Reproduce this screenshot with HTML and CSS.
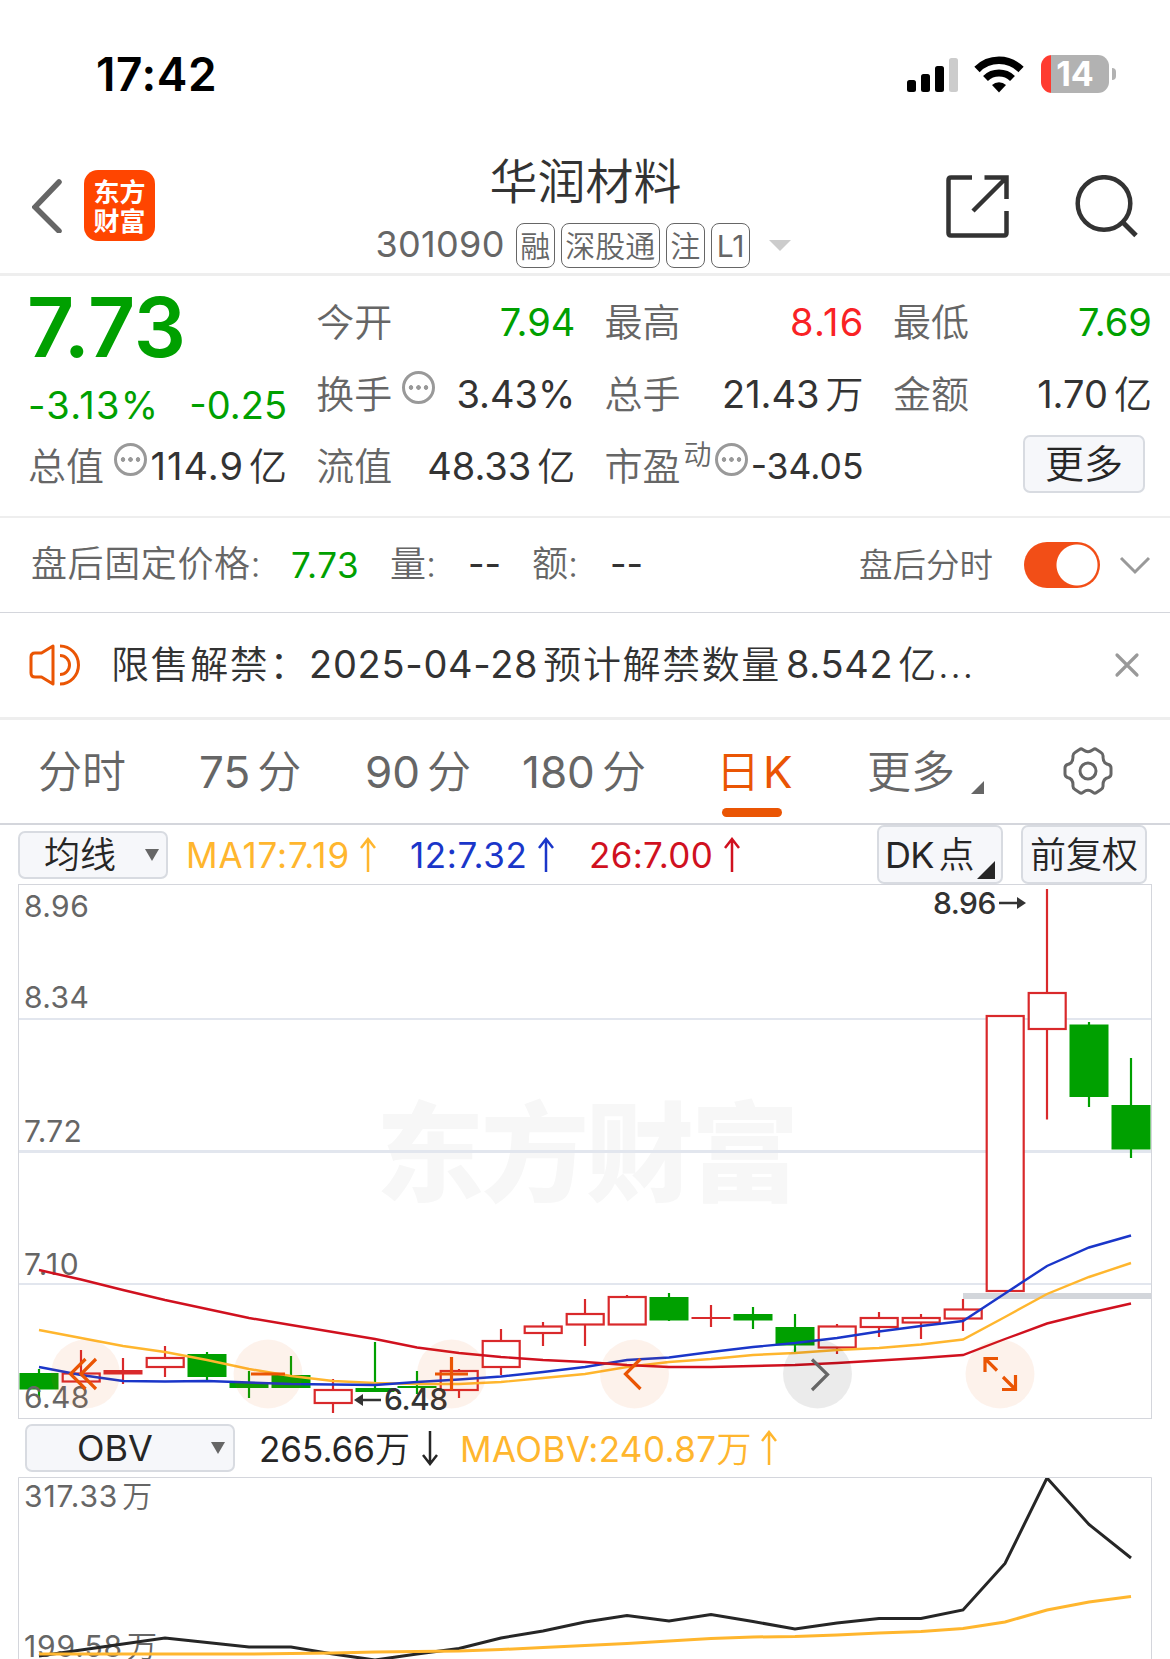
FILE: index.html
```html
<!DOCTYPE html>
<html lang="zh-CN">
<head>
    <meta charset="UTF-8">
    <meta name="viewport" content="width=device-width, initial-scale=1.0">
    <title>华润材料 301090</title>
    <link rel="stylesheet" href="styles.css">
</head>
<body>
    <div class="status-bar">
        <span class="time">17:42</span>
        <div class="status-icons">
            <svg class="signal" width="51" height="35" viewBox="0 0 51 35">
                <rect x="0" y="23" width="9" height="12" rx="2.5"/>
                <rect x="14" y="17" width="9" height="18" rx="2.5"/>
                <rect x="28" y="9" width="9" height="26" rx="2.5"/>
                <rect x="42" y="1" width="9" height="34" rx="2.5" fill="#ccc"/>
            </svg>
            <svg class="wifi" width="50" height="37" viewBox="0 0 50 37">
                <path d="M3 13.5 A31 31 0 0 1 47 13.5" fill="none" stroke="#000" stroke-width="7.5"/>
                <path d="M11.5 22.5 A19.5 19.5 0 0 1 38.5 22.5" fill="none" stroke="#000" stroke-width="7"/>
                <path d="M25 36.5 L18 29 A10 10 0 0 1 32 29 Z"/>
            </svg>
            <div class="battery"><span>14</span></div>
        </div>
    </div>

    <header class="header">
        <div class="header-left">
            <svg width="31" height="54" viewBox="0 0 31 54"><path d="M27 3 L3 28 L27 52" fill="none" stroke="#666" stroke-width="5.5" stroke-linecap="round"/></svg>
            <div class="logo"><span>东方</span><span>财富</span></div>
        </div>
        <div class="header-title">
            <h1>华润材料</h1>
            <div class="sub">
                <span class="code">301090</span>
                <span class="tag">融</span>
                <span class="tag">深股通</span>
                <span class="tag">注</span>
                <span class="tag tag-l1">L1</span>
                <i class="sub-arrow"></i>
            </div>
        </div>
        <div class="header-right">
            <svg width="64" height="64" viewBox="0 0 64 64" fill="none" stroke="#333" stroke-width="4.5">
                <path d="M26 2.5 H5 Q2.5 2.5 2.5 5 V58 Q2.5 60.5 5 60.5 H58 Q60.5 60.5 60.5 58 V36"/>
                <path d="M38.5 2.5 H60.5 V24 M60 3 L27 36"/>
            </svg>
            <svg width="64" height="64" viewBox="0 0 64 64" fill="none" stroke="#333" stroke-width="4.5">
                <circle cx="29" cy="28.5" r="26.3"/>
                <path d="M47.5 47 L61 60.5" stroke-width="5"/>
            </svg>
        </div>
    </header>

    <section class="quote">
        <div class="price-box">
            <div class="price">7.73</div>
            <div class="change"><span class="wide">-3.13%</span><span>-0.25</span></div>
        </div>
        <div class="cell"><label>今开</label><b class="green">7.94</b></div>
        <div class="cell"><label>最高</label><b class="red wide">8.16</b></div>
        <div class="cell"><label>最低</label><b class="green">7.69</b></div>
        <div class="cell"><label>换手</label><i class="info"></i><b>3.43%</b></div>
        <div class="cell"><label>总手</label><b>21.43<em>万</em></b></div>
        <div class="cell"><label>金额</label><b>1.70<em>亿</em></b></div>
        <div class="cell"><label>总值</label><i class="info"></i><b class="cap">114.9<em>亿</em></b></div>
        <div class="cell"><label>流值</label><b>48.33<em>亿</em></b></div>
        <div class="cell"><label>市盈</label><sup>动</sup><i class="info info-pe"></i><b class="small">-34.05</b></div>
        <div class="cell"><button class="btn more-btn">更多</button></div>
    </section>

    <section class="after-hours">
        <span class="ah-label">盘后固定价格:</span>
        <span class="ah-price">7.73</span>
        <span class="ah-item">量:</span>
        <span class="dash">--</span>
        <span class="ah-item">额:</span>
        <span class="dash">--</span>
        <span class="ah-switch-label">盘后分时</span>
        <span class="switch"></span>
        <svg width="32" height="20" viewBox="0 0 32 20"><path d="M2 3 L16 17 L30 3" fill="none" stroke="#999" stroke-width="3"/></svg>
    </section>

    <section class="notice">
        <svg width="52" height="44" viewBox="0 0 52 44" fill="none" stroke="#ea5504" stroke-width="3">
            <path d="M24 3 V41 L12.5 34 H6 Q2 34 2 30 V14 Q2 10 6 10 H12.5 Z" stroke-linejoin="round"/>
            <path d="M31 12.5 A9.5 9.5 0 0 1 31 31.5"/>
            <path d="M31 3 A18.5 19 0 0 1 31 41"/>
        </svg>
        <p>限售解禁：<span class="date">2025-04-28</span>预计解禁数量<span class="amount">8.542</span>亿<span class="dots">...</span></p>
        <svg class="close" width="26" height="26" viewBox="0 0 26 26"><path d="M3 3 L23 23 M23 3 L3 23" stroke="#999" stroke-width="3.2" stroke-linecap="round"/></svg>
    </section>

    <nav class="tabs">
        <a class="tab t1">分时</a>
        <a class="tab t2">75<em>分</em></a>
        <a class="tab t3">90<em>分</em></a>
        <a class="tab t4">180<em>分</em></a>
        <a class="tab t5 active">日<em>K</em></a>
        <a class="tab t6">更多</a>
        <i class="corner"></i>
        <svg class="gear" width="50" height="50" viewBox="0 0 50 50" fill="none" stroke="#666" stroke-width="3">
            <path d="M16.5 3.5 Q18.5 2 20.5 4 Q25 7.5 29.5 4 Q31.5 2 33.5 3.5 L38 6.5 Q40.5 8 40 11 Q40 17.5 45.5 18.5 Q48 19.5 48 22 V28 Q48 30.5 45.5 31.5 Q40 32.5 40 39 Q40.5 42 38 43.5 L33.5 46.5 Q31.5 48 29.5 46 Q25 42.5 20.5 46 Q18.5 48 16.5 46.5 L12 43.5 Q9.5 42 10 39 Q10 32.5 4.5 31.5 Q2 30.5 2 28 V22 Q2 19.5 4.5 18.5 Q10 17.5 10 11 Q9.5 8 12 6.5 Z"/>
            <circle cx="25" cy="25" r="8"/>
        </svg>
    </nav>

    <div class="toolbar">
        <button class="btn select ma-select">均线<i class="caret"></i></button>
        <span class="ind ma17">MA17:7.19</span>
        <svg class="arrow yellow" width="16" height="36" viewBox="0 0 16 36"><path d="M8 35 V2 M1 11 L8 2 L15 11"/></svg>
        <span class="ind ma12">12:7.32</span>
        <svg class="arrow blue" width="16" height="36" viewBox="0 0 16 36"><path d="M8 35 V2 M1 11 L8 2 L15 11"/></svg>
        <span class="ind ma26">26:7.00</span>
        <svg class="arrow crimson" width="16" height="36" viewBox="0 0 16 36"><path d="M8 35 V2 M1 11 L8 2 L15 11"/></svg>
        <button class="btn dk-btn">DK<em>点</em>
            <svg class="dk-corner" width="18" height="18" viewBox="0 0 18 18"><path d="M18 0 V18 H0 Z"/></svg>
        </button>
        <button class="btn fq-btn">前复权</button>
    </div>

    <svg class="chart" width="1134" height="535" viewBox="18 884 1134 535">
        <text class="watermark" x="376" y="1193" textLength="423">东方财富</text>
        <g class="grid">
            <path d="M18 1019 H1152" stroke-width="2"/>
            <path d="M18 1151.5 H1152" stroke-width="3"/>
            <path d="M18 1284 H1152" stroke-width="2"/>
        </g>
        <path d="M963 1296 H1152" stroke="#d3d6db" stroke-width="6"/>
        <g id="candles"></g>
        <g class="axis">
            <text x="24" y="917">8.96</text>
            <text x="24" y="1008">8.34</text>
            <text x="24" y="1142">7.72</text>
            <text x="24" y="1274.5" class="loose">7.10</text>
            <text x="24" y="1407.5">6.48</text>
        </g>
        <g id="maLines"></g>
        <g class="mark">
            <text x="933" y="914">8.96</text>
            <path d="M999 903 H1018" stroke="#333" stroke-width="2.5"/>
            <path d="M1017 897 L1026 903 L1017 909 Z"/>
            <text x="384" y="1410">6.48</text>
            <path d="M381 1400 H362" stroke="#333" stroke-width="2.5"/>
            <path d="M363 1394 L354 1400 L363 1406 Z"/>
        </g>
        <g class="controls">
            <circle cx="85.5" cy="1374" r="34.5"/>
            <circle cx="268" cy="1374" r="34.5"/>
            <circle cx="451.5" cy="1374" r="34.5"/>
            <circle cx="634.5" cy="1374" r="34.5"/>
            <circle class="disabled" cx="817.5" cy="1374" r="34.5"/>
            <circle cx="1000" cy="1374" r="34.5"/>
            <path d="M85.5 1359 L70.5 1374 L85.5 1389 M96 1359 L81 1374 L96 1389"/>
            <path d="M251 1374 H285"/>
            <path d="M435 1374 H468 M451.5 1357 V1390"/>
            <path d="M640.5 1359 L625.5 1374 L640.5 1389"/>
            <path class="disabled" d="M812 1359.5 L827.5 1374.5 L812 1390"/>
            <path d="M998 1358.5 H985 V1372 M985 1358.5 L997 1370.5 M1002 1389.5 H1015.5 V1375 M1015.5 1389.5 L1003 1377"/>
        </g>
        <rect class="frame" x="18.5" y="884.5" width="1133" height="534"/>
    </svg>

    <div class="toolbar toolbar-obv">
        <button class="btn select obv-select">OBV<i class="caret"></i></button>
        <span class="ind obv">265.66<em>万</em></span>
        <svg class="arrow dark" width="16" height="36" viewBox="0 0 16 36"><path d="M8 1 V34 M1 25 L8 34 L15 25"/></svg>
        <span class="ind maobv">MAOBV:240.87<em>万</em></span>
        <svg class="arrow yellow" width="16" height="36" viewBox="0 0 16 36"><path d="M8 35 V2 M1 11 L8 2 L15 11"/></svg>
    </div>

    <svg class="chart" width="1134" height="182" viewBox="18 1477 1134 182">
        <g class="axis">
            <text x="24" y="1507" class="obv-axis">317.33<tspan dx="4">万</tspan></text>
            <text x="24" y="1657" class="obv-axis">199.58<tspan dx="4">万</tspan></text>
        </g>
        <g id="obvLines"></g>
        <path class="frame" d="M18.5 1659 V1477.5 H1151.5 V1659"/>
    </svg>

    <script src="chart.js"></script>
</body>
</html>
```
FILE: styles.css
```css
* {
    box-sizing: border-box;
}
body {
    margin: 0;
    width: 1170px;
    height: 1659px;
    overflow: hidden;
    background-color: #fff;
    color: #333;
    font-family: Inter, 'Noto Sans CJK SC', sans-serif;
    font-weight: 400;
    line-height: 1.2;
    display: flex;
    flex-direction: column;
}
body > * {
    flex-shrink: 0;
}
svg {
    display: block;
    flex-shrink: 0;
}
em, i {
    font-style: normal;
}
em {
    font-weight: 350;
}
.green {
    color: #00a000;
}
.red {
    color: #f92224;
}

/* status bar */
.status-bar {
    height: 130px;
    padding: 18px 53px 0 96px;
    display: flex;
    justify-content: space-between;
    align-items: center;
    color: #000;
}
.time {
    padding-top: 2px;
    font-size: 46px;
    font-weight: 600;
    letter-spacing: 0.6px;
}
.status-icons {
    display: flex;
    align-items: center;
}
.wifi {
    margin: 0 17px 0 16px;
}
.battery {
    position: relative;
    width: 68px;
    height: 38px;
    border-radius: 11px;
    background: linear-gradient(90deg, #ff3b30 10px, #b2b2b2 10px);
    color: #fff;
    font-size: 34px;
    font-weight: 700;
    line-height: 38px;
    text-align: center;
    margin-right: 8px;
}
.battery::after {
    content: '';
    position: absolute;
    left: 71px;
    top: 13px;
    width: 4px;
    height: 12px;
    border-radius: 0 4px 4px 0;
    background-color: #b2b2b2;
}

/* header */
.header {
    height: 146px;
    padding: 20px 31px 0 32px;
    border-bottom: 3px solid #eee;
    display: grid;
    grid-template-columns: 1fr auto 1fr;
}
.header-left {
    display: flex;
    align-items: center;
    gap: 21px;
    height: 111px;
}
.logo {
    width: 71px;
    height: 71px;
    border-radius: 14px;
    background-color: #ff4500;
    color: #fff;
    font-size: 26px;
    font-weight: 700;
    line-height: 29px;
    padding-top: 2px;
    display: flex;
    flex-direction: column;
    align-items: center;
    justify-content: center;
}
.header-title {
    display: flex;
    flex-direction: column;
    align-items: center;
}
.header-title h1 {
    margin: 0 0 9px;
    padding-top: 1px;
    font-size: 48px;
    font-weight: 350;
    line-height: 62px;
}
.sub {
    display: flex;
    align-items: center;
    gap: 6px;
    height: 46px;
    margin-right: 4px;
    color: #666;
}
.code {
    font-size: 36px;
    letter-spacing: 0.3px;
    margin-right: 5px;
}
.tag {
    height: 45px;
    padding: 0 3.5px;
    border: 1.5px solid #666;
    border-radius: 8px;
    font-size: 30px;
    font-weight: 350;
    line-height: 44px;
}
.tag-l1 {
    padding: 0 5px;
    font-weight: 400;
}
.sub-arrow {
    margin-left: 13px;
    border: 11px solid transparent;
    border-top-color: #ccc;
    border-bottom: 0;
}
.header-right {
    display: flex;
    justify-content: flex-end;
    gap: 65px;
    padding-top: 25px;
}

/* quote grid */
.quote {
    height: 242px;
    padding: 10px 18px 0 28px;
    border-bottom: 2px solid #eee;
    display: grid;
    grid-template-columns: repeat(4, 259px);
    grid-template-rows: repeat(3, 72px);
    column-gap: 29.3px;
}
.price-box {
    grid-row: 1 / span 2;
    color: #00a000;
}
.price {
    font-size: 82px;
    font-weight: 600;
    line-height: 84px;
    letter-spacing: -0.2px;
    margin-left: -1px;
}
.change {
    display: flex;
    justify-content: space-between;
    font-size: 38px;
    line-height: 70px;
}
.cell {
    display: flex;
    align-items: center;
}
.cell label {
    padding-top: 2px;
    font-size: 38px;
    font-weight: 350;
    color: #666;
}
.cell b {
    margin-left: auto;
    padding-top: 1px;
    font-size: 38px;
    font-weight: 400;
    white-space: nowrap;
}
.cell b em {
    margin-left: 6px;
}
.wide {
    letter-spacing: 1.3px;
}
.cell .wide {
    margin-right: -1px;
}
.cell .cap {
    letter-spacing: 1px;
    margin-right: -1px;
}
.cell .cap em {
    margin-left: 5px;
}
.cell .small {
    font-size: 35.5px;
    padding-top: 3px;
}
.cell sup {
    font-size: 28px;
    font-weight: 350;
    line-height: 28px;
    color: #666;
    margin: -22px 0 0 3px;
}
.info {
    width: 33px;
    height: 33px;
    margin: -14px 0 0 10px;
    border: 3px solid #999;
    border-radius: 50%;
    flex-shrink: 0;
    background:
        radial-gradient(circle at 6px 13.5px, #999 2px, transparent 2.6px),
        radial-gradient(circle at 13.5px 13.5px, #999 2px, transparent 2.6px),
        radial-gradient(circle at 21px 13.5px, #999 2px, transparent 2.6px);
}
.info-pe {
    margin-left: 3px;
}
.btn {
    border: 2px solid #d8dbe1;
    border-radius: 7px;
    background-color: #f6f7fa;
    color: #262626;
    font-family: inherit;
    font-weight: 350;
    padding: 0;
    white-space: nowrap;
}
.more-btn {
    width: 122px;
    height: 58px;
    margin: -5px 7px 0 auto;
    font-size: 39px;
    line-height: 54px;
}

/* after-hours fixed price */
.after-hours {
    height: 95px;
    padding: 0 19px 0 31px;
    border-bottom: 1px solid #d4d6dc;
    display: flex;
    align-items: center;
    font-size: 36px;
    color: #666;
    white-space: nowrap;
}
.ah-label {
    width: 260px;
    font-weight: 350;
    letter-spacing: 0.6px;
}
.ah-price {
    width: 99px;
    font-size: 35px;
    letter-spacing: 0.6px;
    color: #00a000;
}
.ah-item {
    width: 78px;
    font-weight: 350;
}
.dash {
    width: 64px;
    color: #333;
}
.ah-switch-label {
    margin-left: auto;
    font-size: 33.5px;
    font-weight: 350;
}
.switch {
    width: 76px;
    height: 46px;
    margin: -1px 19px 0 31px;
    border-radius: 23px;
    background: radial-gradient(circle at 53px 23px, #fff 20px, transparent 21px), #f24e17;
}

/* notice */
.notice {
    height: 107px;
    padding: 0 30px 0 29px;
    border-bottom: 3px solid #eee;
    display: flex;
    align-items: center;
}
.notice p {
    margin: 0 auto 0 30px;
    font-size: 38px;
    font-weight: 350;
    letter-spacing: 1.6px;
    white-space: nowrap;
}
.date, .amount {
    font-weight: 400;
    letter-spacing: 0.7px;
}
.date {
    margin: 0 5px 0 0;
}
.amount {
    margin: 0 5px;
}

/* period tabs */
.tabs {
    height: 105px;
    padding: 0 57px 0 38px;
    border-bottom: 2px solid #d4d6dc;
    display: flex;
    align-items: center;
    font-size: 44px;
    color: #666;
}
.tab {
    position: relative;
    padding-top: 1px;
    white-space: nowrap;
}
.tab em {
    margin-left: 7px;
}
.t1 { width: 161px; font-weight: 350; }
.t2 { width: 166px; }
.t3 { width: 157px; }
.t4 { width: 194px; }
.t5 { width: 151px; font-weight: 350; }
.t6 { width: 104px; font-weight: 350; }
.tab.active {
    color: #ea5504;
}
.tab.active em {
    margin-left: 3px;
    font-weight: 400;
}
.tab.active::after {
    content: '';
    position: absolute;
    left: 6px;
    top: 63px;
    width: 60px;
    height: 9px;
    border-radius: 4.5px;
    background-color: #ea5504;
}
.corner {
    border-left: 13px solid transparent;
    border-bottom: 13px solid #666;
    margin-top: 31px;
}
.gear {
    margin: -2px 0 0 auto;
}

/* indicator toolbars */
.toolbar {
    height: 59px;
    padding: 0 23px 0 18px;
    display: flex;
    align-items: center;
    font-size: 35px;
    white-space: nowrap;
}
.toolbar .btn {
    font-size: 36px;
    line-height: 44px;
}
.toolbar .select {
    height: 48px;
    display: flex;
    align-items: center;
}
.caret {
    margin-left: auto;
    border: 7px solid transparent;
    border-top: 12px solid #666;
    border-bottom: 0;
}
.toolbar .ma-select {
    width: 150px;
    padding: 0 7px 0 24px;
    margin-right: 18px;
}
.ind {
    padding-top: 1px;
}
.ma17 {
    width: 174px;
    letter-spacing: 0.9px;
    color: #ffb62e;
}
.ma12 {
    width: 128px;
    margin-left: 34px;
    letter-spacing: 0.6px;
    color: #1a36c9;
}
.ma26 {
    width: 135px;
    margin-left: 35px;
    letter-spacing: 0.3px;
    color: #d0111f;
}
.arrow {
    fill: none;
    stroke-width: 2.5;
}
.arrow.yellow { stroke: #ffb62e; }
.arrow.blue { stroke: #1a36c9; }
.arrow.crimson { stroke: #d0111f; }
.arrow.dark { stroke: #262626; }
.toolbar .dk-btn {
    position: relative;
    width: 126px;
    height: 59px;
    margin-left: auto;
    padding-left: 6px;
    text-align: left;
    font-weight: 400;
    letter-spacing: -0.8px;
}
.dk-btn em {
    margin-left: 5px;
}
.dk-corner {
    position: absolute;
    right: 6px;
    bottom: 3px;
    fill: #262626;
}
.toolbar .fq-btn {
    width: 126px;
    height: 59px;
    margin-left: 18px;
}
.toolbar-obv {
    height: 58px;
    padding-left: 25px;
}
.toolbar .obv-select {
    width: 210px;
    padding: 0 8px 0 50px;
    margin-right: 24px;
    font-weight: 400;
}
.obv {
    width: 163px;
    color: #262626;
}
.maobv {
    width: 301px;
    margin-left: 22px;
    letter-spacing: 0.4px;
    color: #ffb62e;
}

/* charts */
.chart {
    margin-left: 18px;
}
.watermark {
    font-size: 108px;
    font-weight: 900;
    fill: #f7f7f7;
}
.grid {
    stroke: #e2e6ee;
}
.axis {
    font-size: 30px;
    letter-spacing: 0.4px;
    fill: #666;
}
.loose {
    letter-spacing: 1.4px;
}
.obv-axis {
    letter-spacing: 0.9px;
}
.axis tspan {
    font-weight: 350;
}
.mark {
    font-size: 30px;
    font-weight: 500;
    letter-spacing: -0.5px;
    fill: #333;
}
.frame {
    fill: none;
    stroke: #d4d6dc;
}
.controls circle {
    fill: rgba(234, 85, 4, 0.08);
}
.controls path {
    fill: none;
    stroke: #ea5504;
    stroke-width: 3.2;
}
.controls circle.disabled {
    fill: rgba(0, 0, 0, 0.08);
}
.controls path.disabled {
    stroke: #666;
}
.line {
    fill: none;
    stroke-width: 2.2;
}
```
FILE: chart.js
```javascript
const STEP = 42;
const FIRST = 39;
const NS = 'http://www.w3.org/2000/svg';

// [type, body top, body bottom, wick top, wick bottom]
// g = down (solid), r = up (hollow)
const candles = [
    ['g', 1373, 1389.5, 1369, 1400],
    ['r', 1372.5, 1382.5, 1350, 1382],
    ['r', 1370, 1374.5, 1358, 1384],
    ['r', 1357, 1368, 1346, 1377],
    ['g', 1354, 1377, 1352, 1381],
    ['g', 1382.5, 1388, 1371, 1398],
    ['g', 1375, 1388, 1356, 1388],
    ['r', 1389, 1404, 1379, 1413],
    ['g', 1388, 1392, 1342, 1392],
    ['g', 1386, 1388, 1371, 1394],
    ['r', 1370, 1391, 1369, 1398],
    ['r', 1340, 1368, 1329, 1375],
    ['r', 1325.5, 1334, 1322, 1346],
    ['r', 1313, 1325.5, 1299, 1346],
    ['r', 1296, 1325.5, 1295, 1325],
    ['g', 1297, 1320.5, 1293, 1321],
    ['r', 1317, 1319, 1305, 1327],
    ['g', 1314, 1320.5, 1307, 1329],
    ['g', 1327, 1345.5, 1314, 1354],
    ['r', 1325.5, 1348.5, 1324, 1354],
    ['r', 1317, 1328, 1312, 1337],
    ['r', 1317, 1323.5, 1314, 1339],
    ['r', 1308.5, 1319.5, 1299, 1331],
    ['r', 1015, 1292, 1016, 1291],
    ['r', 992, 1030, 889, 1119.5],
    ['g', 1024.5, 1097, 1022, 1107],
    ['g', 1105, 1149.5, 1058, 1158]
];

const ma = {
    '#ffb62e': [1330, 1338, 1346, 1352, 1360, 1369, 1376, 1381, 1383, 1384, 1384, 1382, 1378, 1374, 1367, 1362, 1359, 1355, 1353, 1350, 1348, 1344.5, 1339.5, 1317, 1294, 1277, 1263],
    '#1a36c9': [1367, 1375, 1381, 1381.5, 1381, 1382.5, 1384, 1384.5, 1385, 1382, 1379.5, 1376.5, 1372, 1367, 1360, 1357.5, 1352, 1347, 1343, 1338, 1331.5, 1326, 1321, 1293.5, 1266, 1247.5, 1235.5],
    '#d0111f': [1270, 1279.5, 1290, 1300, 1309, 1318, 1325, 1332, 1339, 1347.5, 1353, 1357, 1360, 1362, 1365, 1367, 1367, 1366, 1365, 1363, 1360.5, 1358, 1355, 1339, 1323.5, 1313, 1303.5]
};

const obv = {
    '#262626': [1656, 1650, 1644, 1638, 1642.5, 1647, 1647, 1654, 1660, 1654, 1648.5, 1638, 1631, 1622, 1615.5, 1621, 1614.5, 1621.5, 1629, 1623, 1618.5, 1618.5, 1610, 1563.5, 1478, 1524.5, 1558],
    '#ffb62e': [1654, 1654, 1654, 1654, 1654, 1654, 1653.5, 1653, 1652, 1651.5, 1651, 1649.5, 1647.5, 1645.5, 1643.5, 1641, 1638.5, 1637, 1636.5, 1635, 1633, 1631.5, 1628.5, 1622, 1610, 1602, 1596.5]
};

function add(parent, name, attrs) {
    const el = document.createElementNS(NS, name);
    for (const key in attrs) {
        el.setAttribute(key, attrs[key]);
    }
    parent.appendChild(el);
}

function drawCandles() {
    const g = document.getElementById('candles');
    candles.forEach(([type, top, bottom, high, low], i) => {
        const x = FIRST + i * STEP;
        const color = type === 'g' ? '#00a000' : '#d9292b';
        add(g, 'path', { d: `M${x} ${high} V${low}`, stroke: color, 'stroke-width': 2.2 });
        if (type === 'g' || bottom - top < 5) {
            add(g, 'rect', { x: x - 19.5, y: top, width: 39, height: bottom - top, fill: color });
        } else {
            add(g, 'rect', { x: x - 18.3, y: top + 1, width: 37, height: bottom - top - 2, fill: '#fff', stroke: color, 'stroke-width': 2.2 });
        }
    });
}

function drawLines(id, series, width) {
    const g = document.getElementById(id);
    for (const color in series) {
        const points = series[color].map((y, i) => `${FIRST + i * STEP},${y}`).join(' ');
        add(g, 'polyline', { class: 'line', points, stroke: color, style: `stroke-width: ${width}px` });
    }
}

drawCandles();
drawLines('maLines', ma, 2.4);
drawLines('obvLines', obv, 3);
```
